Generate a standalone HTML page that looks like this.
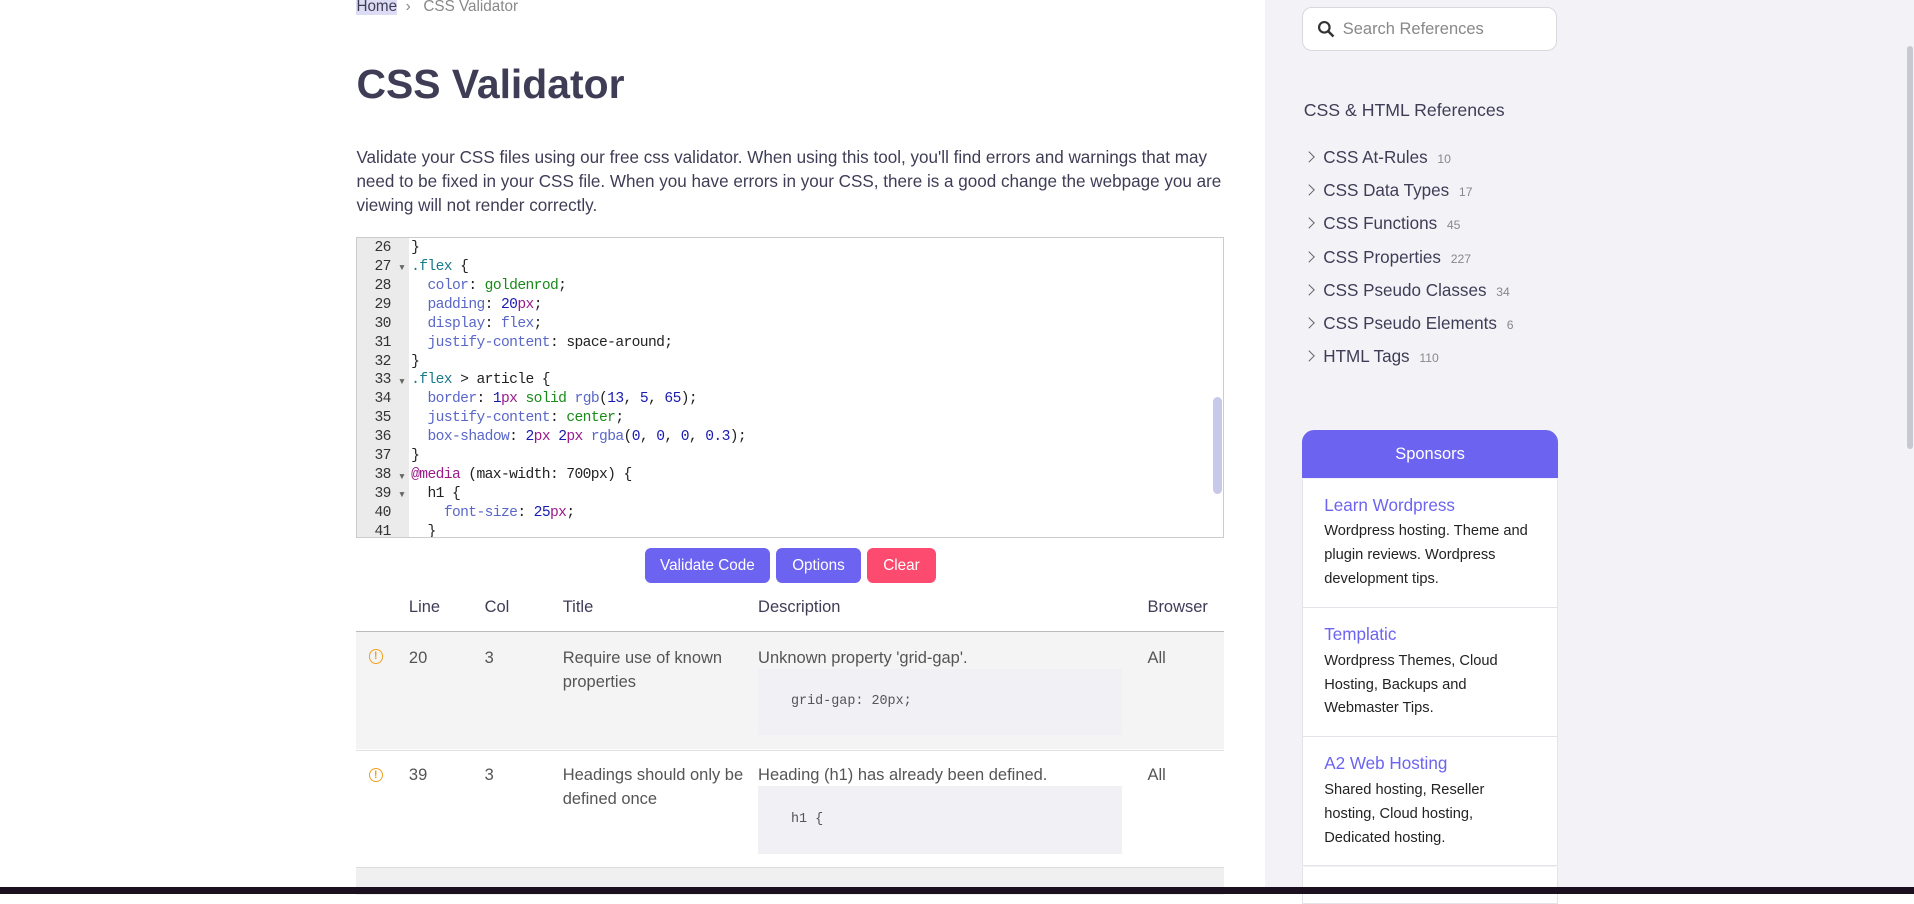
<!DOCTYPE html>
<html><head><meta charset="utf-8"><style>
html,body{margin:0;padding:0;}
body{width:1568px;height:732px;overflow:hidden;zoom:1.2207;font-family:"Liberation Sans",sans-serif;background:#fff;position:relative;color:#3f3d56;}
.side{position:absolute;left:1036px;top:0;width:532px;height:732px;background:#f3f3f7;}
.sb{position:absolute;left:1562px;top:38px;width:5px;height:330px;background:#c8c8d0;border-radius:3px;}
.a{position:absolute;}
.code{font-family:"Liberation Mono",monospace;font-size:12px;letter-spacing:-0.5px;line-height:15.5px;white-space:pre;}
.p{color:#5a67c8}.g{color:#1a8a1a}.n{color:#1a1ab0}.u{color:#9a1a8a}.t{color:#1a7a8a}
.btn{position:absolute;top:449px;height:29px;border-radius:5px;color:#fff;font-size:12.5px;line-height:29px;text-align:center;}
.li{position:absolute;left:1084px;font-size:14px;color:#3f3d56;}
.li small{font-size:10px;color:#888;margin-left:8px;}
.chev{position:absolute;left:1069px;width:6px;height:6px;border-right:1.3px solid #666;border-top:1.3px solid #666;transform:rotate(45deg);}
.sp{position:absolute;left:1067px;width:208px;background:#fff;border-left:1px solid #e3e3ea;border-right:1px solid #e3e3ea;border-bottom:1px solid #e3e3ea;}
.sp b{display:block;font-weight:normal;color:#6c63f0;font-size:14px;margin:14px 0 4px 17px;}
.sp span{display:block;font-size:12px;line-height:19.5px;color:#222;margin-left:17px;width:178px;}
.warn{position:absolute;left:302px;width:10px;height:10px;border:1.5px solid #f0a020;border-radius:50%;color:#f0a020;font-size:9px;line-height:10px;text-align:center;font-weight:bold;}
.fold{font-size:7px;color:#666;position:absolute;left:33px;}
</style></head><body>
<div class="side"></div>
<div class="sb"></div>
<div class="a" style="left:292px;top:-2px;font-size:12.5px;color:#888"><span style="background:#dcdcf5;color:#3f3d56">Home</span> &nbsp;&#8250;&nbsp;&nbsp; CSS Validator</div>
<div class="a" style="left:292px;top:50px;font-size:33.5px;font-weight:bold;color:#3f3d56">CSS Validator</div>
<div class="a" style="left:292px;top:120px;width:730px;font-size:14px;line-height:19.5px;color:#3f3d56">Validate your CSS files using our free css validator. When using this tool, you'll find errors and warnings that may need to be fixed in your CSS file. When you have errors in your CSS, there is a good change the webpage you are viewing will not render correctly.</div>
<div class="a" style="left:292px;top:194px;width:709px;height:245px;border:1px solid #ccc;overflow:hidden;">
<div class="a" style="left:0;top:0;width:42px;height:245px;background:#ebebeb"></div>
<div class="a code" style="left:14px;top:1px;color:#333">26
27
28
29
30
31
32
33
34
35
36
37
38
39
40
41</div>
<span class="fold" style="top:20px">&#9660;</span>
<span class="fold" style="top:113px">&#9660;</span>
<span class="fold" style="top:191px">&#9660;</span>
<span class="fold" style="top:206px">&#9660;</span>
<div class="a code" style="left:44px;top:1px;color:#222">}
<span class="t">.flex</span> {
  <span class="p">color</span>: <span class="g">goldenrod</span>;
  <span class="p">padding</span>: <span class="n">20</span><span class="u">px</span>;
  <span class="p">display</span>: <span class="p">flex</span>;
  <span class="p">justify-content</span>: space-around;
}
<span class="t">.flex</span> &gt; article {
  <span class="p">border</span>: <span class="n">1</span><span class="u">px</span> <span class="g">solid</span> <span class="p">rgb</span>(<span class="n">13</span>, <span class="n">5</span>, <span class="n">65</span>);
  <span class="p">justify-content</span>: <span class="g">center</span>;
  <span class="p">box-shadow</span>: <span class="n">2</span><span class="u">px</span> <span class="n">2</span><span class="u">px</span> <span class="p">rgba</span>(<span class="n">0</span>, <span class="n">0</span>, <span class="n">0</span>, <span class="n">0.3</span>);
}
<span class="u">@media</span> (max-width: 700px) {
  h1 {
    <span class="p">font-size</span>: <span class="n">25</span><span class="u">px</span>;
  }</div>
<div class="a" style="left:701px;top:130px;width:7px;height:80px;background:#c8c8e8;border-radius:4px"></div>
</div>
<div class="btn" style="left:528px;width:103px;background:#6c63f0">Validate Code</div>
<div class="btn" style="left:636px;width:69px;background:#6c63f0">Options</div>
<div class="btn" style="left:710px;width:57px;background:#fd4a6f">Clear</div>
<div class="a" style="left:292px;top:517px;width:711px;height:1px;background:#bbb"></div>
<div class="a" style="left:292px;top:518px;width:711px;height:96px;background:#f4f4f4"></div>
<div class="a" style="left:292px;top:614px;width:711px;height:1px;background:#e0e0e0"></div>
<div class="a" style="left:292px;top:710px;width:711px;height:22px;background:#f0f0f0;border-top:1px solid #ddd"></div>
<div class="a" style="top:490px;left:0;width:1036px;font-size:13.5px;color:#3f3d56">
<span class="a" style="left:335px">Line</span><span class="a" style="left:397px">Col</span><span class="a" style="left:461px">Title</span><span class="a" style="left:621px">Description</span><span class="a" style="left:940px">Browser</span></div>
<div class="warn" style="top:532px">!</div>
<div class="a" style="top:529px;left:0;font-size:13.5px;line-height:20px;color:#555">
<span class="a" style="left:335px">20</span><span class="a" style="left:397px">3</span><span class="a" style="left:461px;width:150px">Require use of known properties</span><span class="a" style="left:621px;width:300px">Unknown property 'grid-gap'.</span><span class="a" style="left:940px">All</span></div>
<div class="a code" style="left:621px;top:548px;width:271px;height:54px;background:#f0f0f5;padding-left:27px;line-height:54px;font-size:11px;letter-spacing:0;color:#555">grid-gap: 20px;</div>
<div class="warn" style="top:629px">!</div>
<div class="a" style="top:625px;left:0;font-size:13.5px;line-height:20px;color:#555">
<span class="a" style="left:335px">39</span><span class="a" style="left:397px">3</span><span class="a" style="left:461px;width:150px">Headings should only be defined once</span><span class="a" style="left:621px;width:300px">Heading (h1) has already been defined.</span><span class="a" style="left:940px">All</span></div>
<div class="a code" style="left:621px;top:644px;width:271px;height:56px;background:#f0f0f5;padding-left:27px;line-height:56px;font-size:11px;letter-spacing:0;color:#555">h1 {</div>

<div class="a" style="left:1067px;top:6px;width:207px;height:34px;border:1px solid #d8d8e0;border-radius:8px;background:#fff"></div>
<svg class="a" style="left:1079px;top:16px" width="15" height="15" viewBox="0 0 15 15"><circle cx="6" cy="6" r="4.3" fill="none" stroke="#333" stroke-width="1.8"/><path d="M9 9l4.5 4.5" stroke="#333" stroke-width="2"/></svg>
<div class="a" style="left:1100px;top:16px;font-size:13.5px;color:#888">Search References</div>
<div class="a" style="left:1068px;top:82px;font-size:14.5px;color:#3f3d56">CSS &amp; HTML References</div>
<div class="chev" style="top:125px"></div><div class="li" style="top:121px">CSS At-Rules<small>10</small></div>
<div class="chev" style="top:152px"></div><div class="li" style="top:148px">CSS Data Types<small>17</small></div>
<div class="chev" style="top:179px"></div><div class="li" style="top:175px">CSS Functions<small>45</small></div>
<div class="chev" style="top:207px"></div><div class="li" style="top:203px">CSS Properties<small>227</small></div>
<div class="chev" style="top:234px"></div><div class="li" style="top:230px">CSS Pseudo Classes<small>34</small></div>
<div class="chev" style="top:261px"></div><div class="li" style="top:257px">CSS Pseudo Elements<small>6</small></div>
<div class="chev" style="top:288px"></div><div class="li" style="top:284px">HTML Tags<small>110</small></div>
<div class="a" style="left:1067px;top:352px;width:209px;height:40px;background:#6c63f0;border-radius:10px 10px 0 0;color:#fff;font-size:13.5px;line-height:40px;text-align:center">Sponsors</div>
<div class="sp" style="top:392px;height:105px"><b>Learn Wordpress</b><span>Wordpress hosting. Theme and plugin reviews. Wordpress development tips.</span></div>
<div class="sp" style="top:498px;height:105px"><b>Templatic</b><span>Wordpress Themes, Cloud Hosting, Backups and Webmaster Tips.</span></div>
<div class="sp" style="top:604px;height:105px"><b>A2 Web Hosting</b><span style="width:150px">Shared hosting, Reseller hosting, Cloud hosting, Dedicated hosting.</span></div>
<div class="sp" style="top:710px;height:30px"></div>
<div class="a" style="left:0;top:727px;width:1568px;height:5px;background:#1a1020"></div>
</body></html>
